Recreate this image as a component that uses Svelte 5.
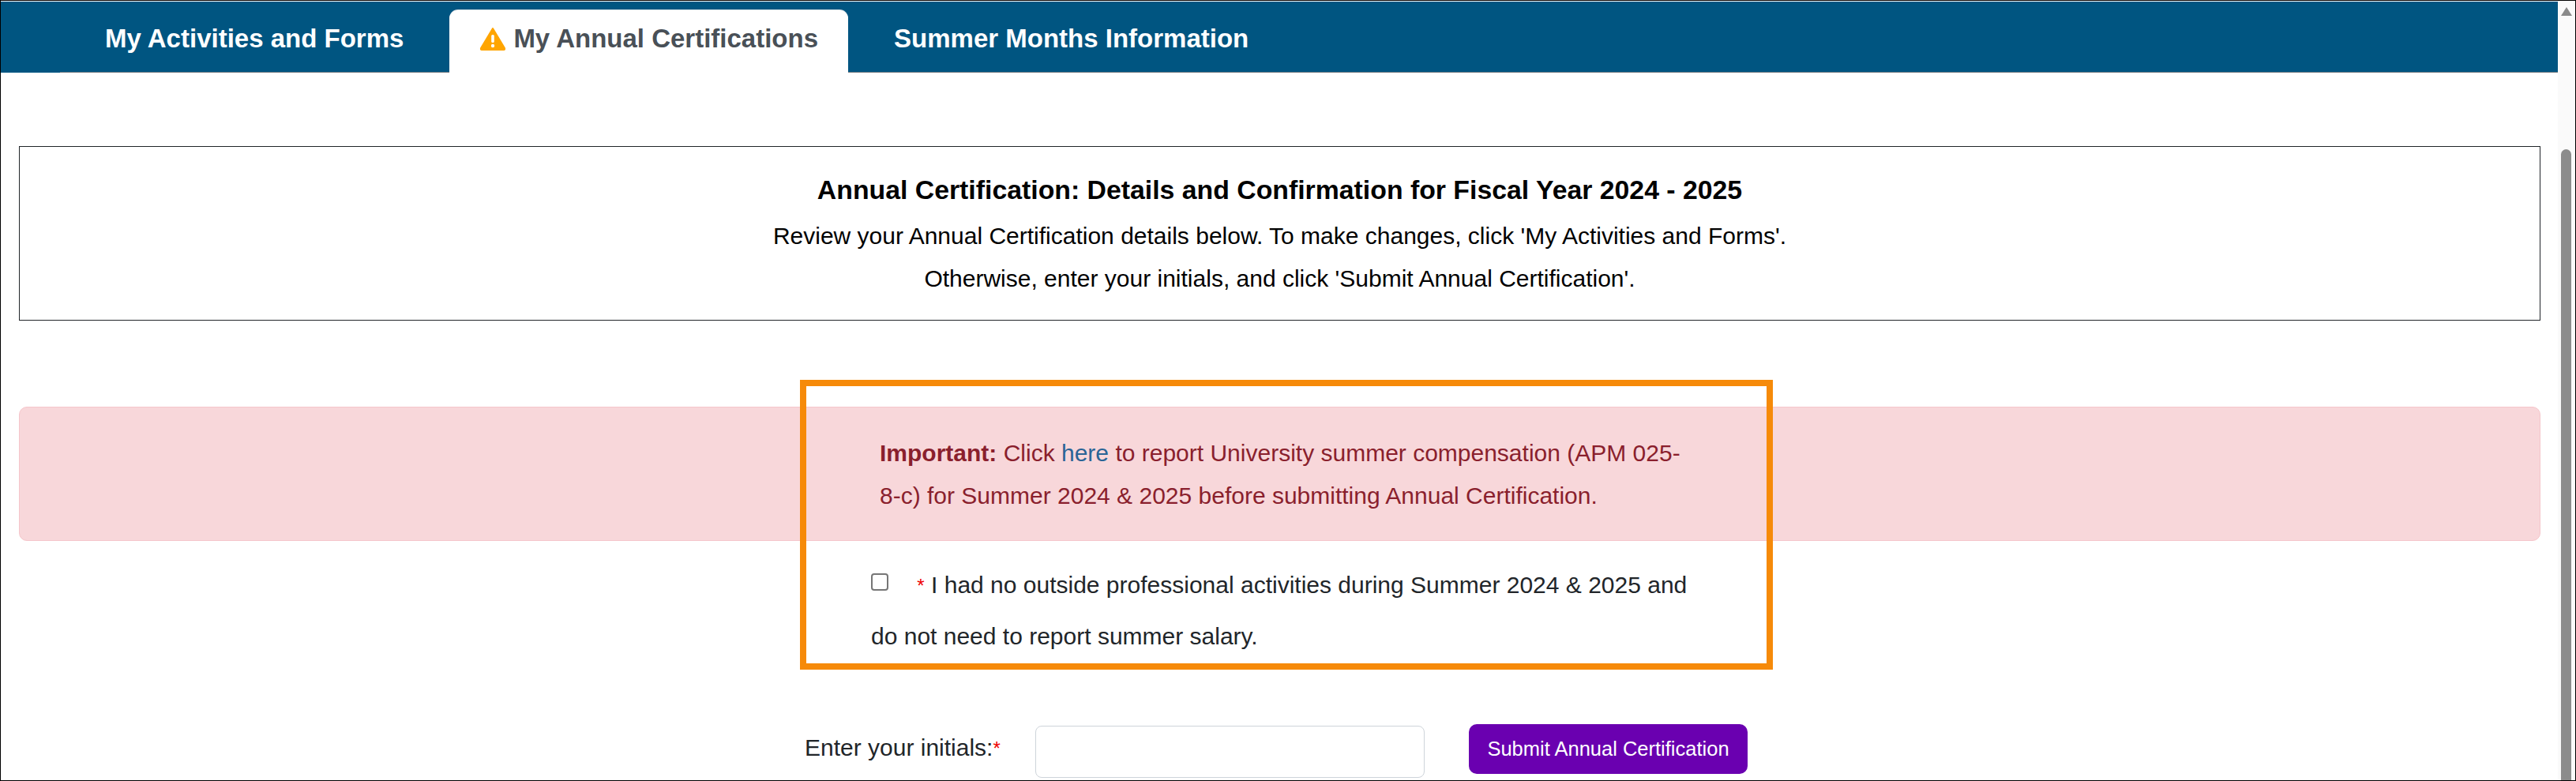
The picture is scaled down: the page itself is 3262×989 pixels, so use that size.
<script>
  let tabs = [
    { label: "My Activities and Forms" },
    { label: "My Annual Certifications", active: true, warn: true },
    { label: "Summer Months Information" },
  ];
  let noActivities = false;
  let initials = "";
</script>

<div class="frame">
  <main>
    <nav>
      <ul>
        {#each tabs as tab}
          <li class:active={tab.active}>
            {#if tab.warn}
              <svg width="34" height="30" viewBox="0 0 34 30">
                <path d="M17 2 L32 27 Q32.500 29 31 29 L3 29 Q1.500 29 2 27 Z" fill="#ffa500" stroke="#ffa500" stroke-width="2" stroke-linejoin="round" />
                <rect x="15.200" y="10" width="3.600" height="10" rx="1.500" fill="#fff" />
                <circle cx="17" cy="24" r="2.200" fill="#fff" />
              </svg>
            {/if}
            {tab.label}
          </li>
        {/each}
      </ul>
    </nav>

    <section class="card">
      <h2>Annual Certification: Details and Confirmation for Fiscal Year 2024 - 2025</h2>
      <p>Review your Annual Certification details below. To make changes, click 'My Activities and Forms'.</p>
      <p>Otherwise, enter your initials, and click 'Submit Annual Certification'.</p>
    </section>

    <div class="alert">
      <p>
        <strong>Important:</strong> Click <a href="#here">here</a> to report University summer compensation (APM 025-8-c) for Summer 2024 &amp; 2025 before submitting Annual Certification.
      </p>
    </div>

    <label class="confirm">
      <input type="checkbox" bind:checked={noActivities} />
      <span class="req">*</span> I had no outside professional activities during Summer 2024 &amp; 2025 and do not need to report summer salary.
    </label>

    <div class="sign">
      <label for="initials">Enter your initials:<span class="req big">*</span></label>
      <input id="initials" type="text" bind:value={initials} />
      <button>Submit Annual Certification</button>
    </div>

    <!-- annotation box drawn over the screenshot -->
    <div class="callout"></div>
  </main>

  <div class="scrollbar">
    <span class="arrow"></span>
    <span class="thumb"></span>
  </div>
</div>

<style>
  :global(body) {
    margin: 0;
    background: #fff;
  }

  .frame {
    box-sizing: border-box;
    width: 3262px;
    height: 989px;
    border: 1px solid #000;
    display: flex;
    overflow: hidden;
    font-family: "Liberation Sans", Arial, sans-serif;
    font-size: 30px;
    color: #212529;
  }

  main {
    position: relative;
    flex: 1;
    min-width: 0;
    padding-top: 1px;
  }

  nav {
    height: 90px;
    background: #005581;
    display: flex;
    align-items: flex-end;
  }
  ul {
    flex: 1;
    display: flex;
    gap: 20px;
    list-style: none;
    margin: 0 0 0 75px;
    padding: 0 0 0 19px;
    border-bottom: 1px solid #6c757d;
    height: 78px;
  }
  li {
    display: flex;
    align-items: center;
    gap: 9px;
    height: 78px;
    padding: 0 38px 6px;
    box-sizing: border-box;
    font-size: 33px;
    font-weight: 700;
    color: #fff;
  }
  li.active {
    background: #fff;
    color: #495057;
    border-radius: 11px 11px 0 0;
    box-shadow: 0 -1px 0 #dee2e6;
    height: 79px;
    padding-bottom: 7px;
  }

  .card {
    margin: 93px 22px 0 23px;
    height: 221px;
    box-sizing: border-box;
    border: 1px solid #212529;
    text-align: center;
    color: #000;
    padding-top: 27px;
  }
  h2 {
    margin: 0 0 5px;
    font-size: 33.800px;
    line-height: 54px;
    font-weight: 700;
  }
  .card p {
    margin: 0;
    line-height: 54px;
  }

  .alert {
    margin: 109px 22px 0 23px;
    height: 170px;
    box-sizing: border-box;
    background: #f8d7da;
    border: 1px solid #f5c6cb;
    border-radius: 10px;
    color: #8a1f2d;
    padding: 31px 0 0 1089px;
  }
  .alert p {
    margin: 0;
    width: 1020px;
    line-height: 54px;
  }
  .alert a {
    color: #2a6496;
    text-decoration: none;
  }

  .confirm {
    display: block;
    width: 1040px;
    margin: 24px 0 0 1102px;
    line-height: 64px;
  }
  .confirm input {
    appearance: none;
    box-sizing: border-box;
    width: 22px;
    height: 22px;
    margin: 0 28px 0 0;
    vertical-align: 3px;
    background: #fff;
    border: 2px solid #767676;
    border-radius: 4px;
  }
  .req {
    color: #e00;
    font-size: 24px;
    vertical-align: 1px;
  }

  .sign {
    display: flex;
    margin: 79px 0 0 1018px;
  }
  .sign label {
    width: 292px;
    padding-top: 13px;
  }
  .sign input {
    width: 493px;
    height: 66px;
    box-sizing: border-box;
    border: 1px solid #ced4da;
    border-radius: 8px;
    margin-top: 2px;
  }
  button {
    width: 353px;
    height: 63px;
    margin-left: 56px;
    background: #6a00b0;
    border: none;
    border-radius: 10px;
    color: #fff;
    font-family: inherit;
    font-size: 25.500px;
  }

  .callout {
    position: absolute;
    left: 1012px;
    top: 480px;
    width: 1232px;
    height: 367px;
    box-sizing: border-box;
    border: 8px solid #f68a09;
    pointer-events: none;
  }

  .scrollbar {
    width: 22px;
    background: #fafafa;
    display: flex;
    flex-direction: column;
    align-items: center;
    padding-right: 1px;
    box-sizing: border-box;
  }
  .arrow {
    width: 0;
    height: 0;
    margin-top: 8px;
    border-left: 7px solid transparent;
    border-right: 7px solid transparent;
    border-bottom: 11px solid #8a8a8a;
  }
  .thumb {
    width: 13px;
    flex: 1;
    margin-top: 169px;
    background: #8c8c8c;
    border-radius: 7px 7px 0 0;
  }
</style>
